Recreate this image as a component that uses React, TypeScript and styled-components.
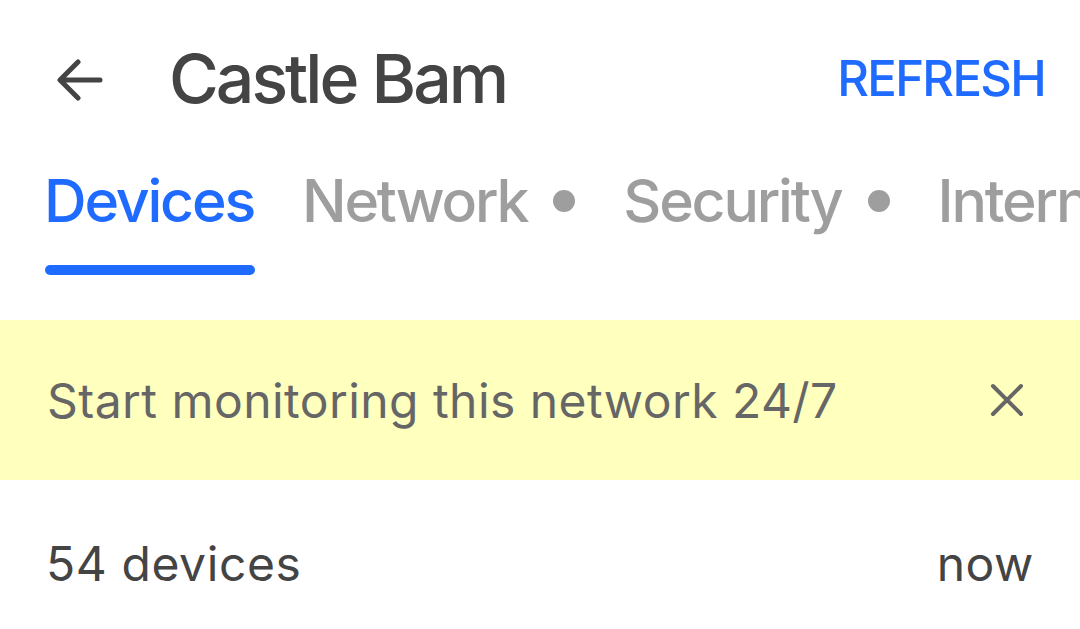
import React from "react";
import styled, { createGlobalStyle } from "styled-components";

const Global = createGlobalStyle`
  html, body { margin: 0; padding: 0; background: #fff; }
  body { font-family: Inter, Roboto, "Noto Sans", sans-serif; overflow: hidden; }
`;

const Page = styled.div`
  width: 1080px;
  height: 629px;
  overflow: hidden;
  background: #fff;
  display: flex;
  flex-direction: column;
  & > * { flex-shrink: 0; }
`;

const TopBar = styled.header`
  height: 160px;
  display: flex;
  align-items: center;
  padding: 0 35px 4px 56px;
  box-sizing: border-box;
`;

const BackButton = styled.button`
  width: 48px;
  height: 48px;
  margin-top: 4px;
  border: 0;
  background: none;
  padding: 0;
  display: flex;
  align-items: center;
  justify-content: center;
  color: #444;
`;

const Title = styled.h1`
  margin: 0 0 0 65px;
  flex: 1;
  font-size: 68px;
  font-weight: 500;
  letter-spacing: -3px;
  color: #444;
`;

const Action = styled.button`
  border: 0;
  background: none;
  padding: 0;
  font-family: inherit;
  font-size: 49px;
  font-weight: 500;
  letter-spacing: -1.7px;
  color: #1f6bff;
`;

const Tabs = styled.nav`
  height: 120px;
  display: flex;
  align-items: flex-start;
  padding-left: 44px;
  gap: 48px;
  white-space: nowrap;
  overflow: hidden;
`;

const Tab = styled.div<{ $active?: boolean }>`
  position: relative;
  flex-shrink: 0;
  height: 115px;
  display: flex;
  align-items: center;
  gap: 26px;
  padding-bottom: 34px;
  box-sizing: border-box;
  font-size: 59px;
  font-weight: 500;
  letter-spacing: -2.2px;
  color: ${(p) => (p.$active ? "#1f6bff" : "#9e9e9e")};
  &::after {
    content: "";
    display: ${(p) => (p.$active ? "block" : "none")};
    position: absolute;
    left: 1px;
    right: -1px;
    bottom: 0;
    height: 10px;
    border-radius: 5px;
    background: #1f6bff;
  }
`;

const Dot = styled.span`
  width: 22px;
  height: 22px;
  border-radius: 50%;
  background: #9e9e9e;
`;

const Spacer = styled.div`
  height: 40px;
`;

const Banner = styled.div`
  height: 160px;
  background: #ffffbe;
  display: flex;
  align-items: center;
  padding: 0 56px 0 47px;
`;

const BannerText = styled.div`
  flex: 1;
  font-size: 48px;
  letter-spacing: 0.45px;
  color: #666;
`;

const Close = styled.button`
  border: 0;
  background: none;
  padding: 0;
  color: #666;
  display: flex;
`;

const Summary = styled.div`
  height: 166px;
  display: flex;
  align-items: center;
  justify-content: space-between;
  padding: 0 46px 0 46px;
  font-size: 48px;
  letter-spacing: 0.6px;
  color: #444;
`;

export default function App() {
  return (
    <Page>
      <Global />
      <TopBar>
        <BackButton aria-label="Back">
          <svg width="46" height="46" viewBox="0 0 46 46" fill="none" stroke="currentColor" strokeWidth="5" strokeLinecap="round" strokeLinejoin="round">
            <path d="M43 23H4M21 5L3 23l18 18" />
          </svg>
        </BackButton>
        <Title>Castle Bam</Title>
        <Action>REFRESH</Action>
      </TopBar>
      <Tabs>
        <Tab $active>Devices</Tab>
        <Tab>Network<Dot /></Tab>
        <Tab>Security<Dot /></Tab>
        <Tab>Internet</Tab>
      </Tabs>
      <Spacer />
      <Banner>
        <BannerText>Start monitoring this network 24/7</BannerText>
        <Close aria-label="Dismiss">
          <svg width="34" height="34" viewBox="0 0 34 34" stroke="currentColor" strokeWidth="4" strokeLinecap="round">
            <path d="M3 3l28 28M31 3L3 31" />
          </svg>
        </Close>
      </Banner>
      <Summary>
        <span>54 devices</span>
        <span>now</span>
      </Summary>
    </Page>
  );
}
